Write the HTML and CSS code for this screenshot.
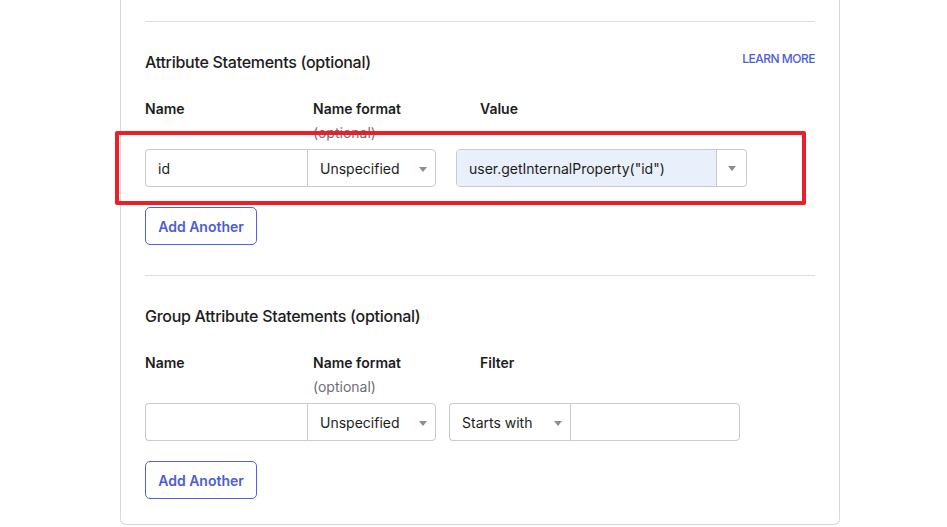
FILE: index.html
```html
<!DOCTYPE html>
<html lang="en">
<head>
<meta charset="utf-8">
<title>Attribute Statements</title>
<link rel="stylesheet" href="styles.css">
</head>
<body>
<div class="card">
  <section class="section">
    <hr class="divider">
    <div class="section-head">
      <h2 class="section-title">Attribute Statements (optional)</h2>
      <a class="learn-more" href="#">LEARN MORE</a>
    </div>
    <div class="labels">
      <div class="label col-name">Name</div>
      <div class="label col-format">Name format<div class="optional">(optional)</div></div>
      <div class="label col-value">Value</div>
    </div>
    <div class="inputs">
      <div class="field-name">id</div>
      <div class="select select-format"><span>Unspecified</span><span class="caret"></span></div>
      <div class="combo">
        <div class="combo-text">user.getInternalProperty("id")</div>
        <div class="combo-toggle"><span class="caret"></span></div>
      </div>
    </div>
    <button class="btn-add" type="button">Add Another</button>
    <div class="highlight"></div>
  </section>
  <section class="section last">
    <hr class="divider">
    <div class="section-head">
      <h2 class="section-title">Group Attribute Statements (optional)</h2>
    </div>
    <div class="labels">
      <div class="label col-name">Name</div>
      <div class="label col-format">Name format<div class="optional">(optional)</div></div>
      <div class="label col-value">Filter</div>
    </div>
    <div class="inputs">
      <div class="field-name"></div>
      <div class="select select-format"><span>Unspecified</span><span class="caret"></span></div>
      <div class="select select-filter"><span>Starts with</span><span class="caret"></span></div>
      <div class="field-filter"></div>
    </div>
    <button class="btn-add" type="button">Add Another</button>
  </section>
</div>
</body>
</html>
```

FILE: styles.css
```css
* { box-sizing: border-box; }
html, body { margin: 0; padding: 0; background: #ffffff; }
body {
  font-family: Inter, "Noto Sans", "Liberation Sans", sans-serif;
  color: #1d1d21;
}
.card {
  position: relative;
  margin-left: 120px;
  width: 720px;
  height: 525px;
  border: 1px solid #d7d7dc;
  border-top: none;
  border-radius: 0 0 6px 6px;
  padding: 21px 24px 0 24px;
}
.divider {
  margin: 0;
  border: none;
  height: 1px;
  background: #dededf;
}
.section-head {
  display: flex;
  justify-content: space-between;
  align-items: flex-start;
  margin-top: 30px;
}
.section-title {
  margin: 0;
  font-size: 16px;
  line-height: 20px;
  font-weight: 500;
  letter-spacing: -0.28px;
}
.learn-more {
  margin-top: 1px;
  font-size: 12px;
  line-height: 12px;
  font-weight: 500;
  color: #4b5dd6;
  text-decoration: none;
  letter-spacing: -0.5px;
}
.labels {
  display: flex;
  margin-top: 27px;
}
.label {
  font-size: 14px;
  line-height: 20px;
  font-weight: 600;
}
.col-name { width: 168px; }
.col-format { width: 167px; }
.optional {
  margin-top: 4px;
  font-weight: 400;
  color: #6e6e78;
}
.inputs {
  display: flex;
  margin-top: 6px;
  height: 38px;
  font-size: 14px;
}
.field-name {
  width: 162px;
  height: 38px;
  border: 1px solid #c9c9ce;
  border-right: none;
  border-radius: 4px 0 0 4px;
  padding: 0 12px;
  line-height: 37px;
}
.select {
  display: flex;
  align-items: center;
  justify-content: space-between;
  height: 38px;
  border: 1px solid #c9c9ce;
  padding: 1px 8px 0 12px;
  color: #1d1d21;
}
.select-format {
  width: 129px;
  border-radius: 0 4px 4px 0;
}
.select-filter {
  width: 121px;
  margin-left: 13px;
  border-radius: 4px 0 0 4px;
  border-right: none;
}
.field-filter {
  width: 170px;
  height: 38px;
  border: 1px solid #c9c9ce;
  border-radius: 0 4px 4px 0;
}
.caret {
  width: 0;
  height: 0;
  border-left: 4px solid transparent;
  border-right: 4px solid transparent;
  border-top: 5px solid #8c8c92;
  margin-top: 1px;
}
.combo {
  display: flex;
  width: 291px;
  height: 38px;
  margin-left: 20px;
  border: 1px solid #c9c9ce;
  border-radius: 4px;
  overflow: hidden;
}
.combo-text {
  flex: 1;
  background: #e9effb;
  padding: 0 12px;
  line-height: 37px;
  border-right: 1px solid #c9c9ce;
  white-space: nowrap;
}
.combo-toggle {
  width: 29px;
  display: flex;
  align-items: center;
  justify-content: center;
}
.btn-add {
  display: block;
  margin-top: 20px;
  width: 112px;
  height: 38px;
  padding: 0;
  background: #ffffff;
  border: 1px solid #4f63dc;
  border-radius: 5px;
  color: #4b5dd6;
  font-family: Inter, "Noto Sans", "Liberation Sans", sans-serif;
  font-size: 14px;
  font-weight: 600;
}
.section { padding-bottom: 30px; }
.section.last { padding-bottom: 0; }
.highlight {
  position: absolute;
  left: -6px;
  top: 131px;
  width: 691px;
  height: 74px;
  border: 4px solid #e8202a;
  border-radius: 2px;
  pointer-events: none;
}
```
